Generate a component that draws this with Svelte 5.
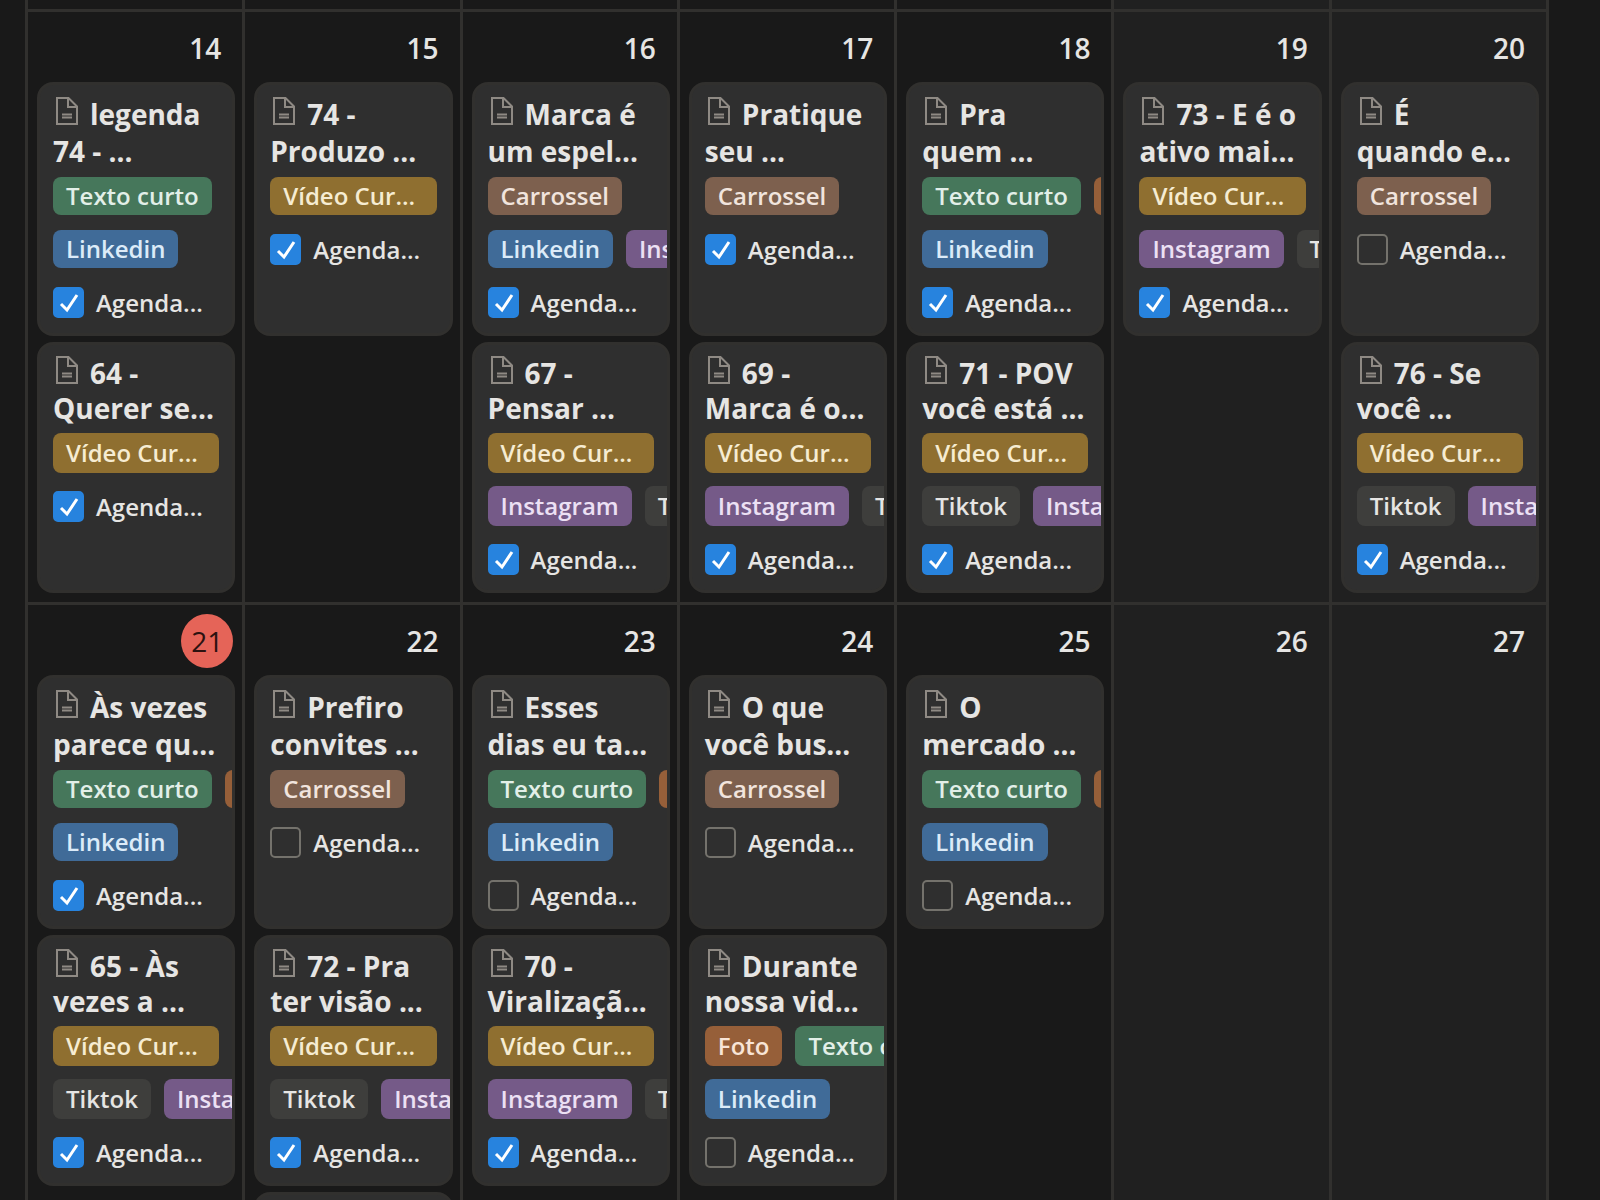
<script lang="ts">
  type Tag = 'texto' | 'video' | 'carrossel' | 'foto' | 'linkedin' | 'instagram' | 'tiktok';
  type Post = { title: string[]; formats: Tag[]; networks?: Tag[]; scheduled: boolean };
  type Day = { date: number; weekend?: boolean; today?: boolean; posts: Post[]; more?: boolean };

  const labels: Record<Tag, string> = {
    texto: 'Texto curto',
    video: 'Vídeo Cur...',
    carrossel: 'Carrossel',
    foto: 'Foto',
    linkedin: 'Linkedin',
    instagram: 'Instagram',
    tiktok: 'Tiktok'
  };

  const weeks: Day[][] = [
    [
      { date: 14, posts: [
        { title: ['legenda', '74 - ...'], formats: ['texto'], networks: ['linkedin'], scheduled: true },
        { title: ['64 -', 'Querer se...'], formats: ['video'], scheduled: true }
      ] },
      { date: 15, posts: [
        { title: ['74 -', 'Produzo ...'], formats: ['video'], scheduled: true }
      ] },
      { date: 16, posts: [
        { title: ['Marca é', 'um espel...'], formats: ['carrossel'], networks: ['linkedin', 'instagram'], scheduled: true },
        { title: ['67 -', 'Pensar ...'], formats: ['video'], networks: ['instagram', 'tiktok'], scheduled: true }
      ] },
      { date: 17, posts: [
        { title: ['Pratique', 'seu ...'], formats: ['carrossel'], scheduled: true },
        { title: ['69 -', 'Marca é o...'], formats: ['video'], networks: ['instagram', 'tiktok'], scheduled: true }
      ] },
      { date: 18, posts: [
        { title: ['Pra', 'quem ...'], formats: ['texto', 'foto'], networks: ['linkedin'], scheduled: true },
        { title: ['71 - POV', 'você está ...'], formats: ['video'], networks: ['tiktok', 'instagram'], scheduled: true }
      ] },
      { date: 19, weekend: true, posts: [
        { title: ['73 - E é o', 'ativo mai...'], formats: ['video'], networks: ['instagram', 'tiktok'], scheduled: true }
      ] },
      { date: 20, weekend: true, posts: [
        { title: ['É', 'quando e...'], formats: ['carrossel'], scheduled: false },
        { title: ['76 - Se', 'você ...'], formats: ['video'], networks: ['tiktok', 'instagram'], scheduled: true }
      ] }
    ],
    [
      { date: 21, today: true, posts: [
        { title: ['Às vezes', 'parece qu...'], formats: ['texto', 'foto'], networks: ['linkedin'], scheduled: true },
        { title: ['65 - Às', 'vezes a ...'], formats: ['video'], networks: ['tiktok', 'instagram'], scheduled: true }
      ] },
      { date: 22, more: true, posts: [
        { title: ['Prefiro', 'convites ...'], formats: ['carrossel'], scheduled: false },
        { title: ['72 - Pra', 'ter visão ...'], formats: ['video'], networks: ['tiktok', 'instagram'], scheduled: true }
      ] },
      { date: 23, posts: [
        { title: ['Esses', 'dias eu ta...'], formats: ['texto', 'foto'], networks: ['linkedin'], scheduled: false },
        { title: ['70 -', 'Viralizaçã...'], formats: ['video'], networks: ['instagram', 'tiktok'], scheduled: true }
      ] },
      { date: 24, posts: [
        { title: ['O que', 'você bus...'], formats: ['carrossel'], scheduled: false },
        { title: ['Durante', 'nossa vid...'], formats: ['foto', 'texto'], networks: ['linkedin'], scheduled: false }
      ] },
      { date: 25, posts: [
        { title: ['O', 'mercado ...'], formats: ['texto', 'foto'], networks: ['linkedin'], scheduled: false }
      ] },
      { date: 26, weekend: true, posts: [] },
      { date: 27, weekend: true, posts: [] }
    ]
  ];
</script>

{#snippet tagRow(tags: Tag[])}
  <div class="tags">
    {#each tags as tag}
      <span class="tag {tag}">{labels[tag]}</span>
    {/each}
  </div>
{/snippet}

<main class="calendar">
  <!-- tail of the previous week -->
  <div class="week previous">
    {#each weeks[0] as day}
      <div class="day" class:weekend={day.weekend}></div>
    {/each}
  </div>

  {#each weeks as week}
    <div class="week">
      {#each week as day}
        <section class="day" class:weekend={day.weekend}>
          <header>
            <span class="date" class:today={day.today}>{day.date}</span>
          </header>
          <div class="posts">
            {#each day.posts as post}
              <article class="card">
                <h2>
                  <span class="line">
                    <svg class="page-icon" viewBox="0 0 24 28" aria-hidden="true">
                      <path d="M2 1h11.5L22 9.500v17.500H2z" />
                      <path d="M13 1.500v8.500h8.500" />
                      <path d="M7 17.500h10M7 20.500h10" />
                    </svg>{post.title[0]}
                  </span>
                  <span class="line">{post.title[1]}</span>
                </h2>
                {@render tagRow(post.formats)}
                {#if post.networks}
                  {@render tagRow(post.networks)}
                {/if}
                <label class="check">
                  <span class="box">
                    <input type="checkbox" bind:checked={post.scheduled} />
                    <svg viewBox="0 0 31 31" aria-hidden="true">
                      <path d="M8 17l6 6L24 8" />
                    </svg>
                  </span>
                  Agenda...
                </label>
              </article>
            {/each}
            {#if day.more}
              <article class="card"></article>
            {/if}
          </div>
        </section>
      {/each}
    </div>
  {/each}
</main>

<style>
  :global(body) {
    margin: 0;
    background: #191919;
    overflow: hidden;
  }

  .calendar {
    height: 100vh;
    overflow: hidden;
    box-sizing: border-box;
    padding: 0 51px 0 25px;
    font-family: "Open Sans", "Noto Sans", sans-serif;
    color: #e6e5e3;
  }

  .week {
    display: grid;
    grid-template-columns: repeat(7, minmax(0, 1fr));
    border-top: 3px solid #31302e;
    border-right: 3px solid #31302e;
  }

  .week.previous {
    height: 9px;
    border-top: 0;
  }

  .day {
    border-left: 3px solid #31302e;
    padding: 0 7px 9px 9px;
  }

  .previous .day { padding-bottom: 0; }

  .weekend { background: #202020; }

  header {
    display: flex;
    justify-content: flex-end;
    padding: 9px 2px 7px 0;
  }

  .date {
    box-sizing: border-box;
    width: 52px;
    height: 54px;
    padding-right: 4px;
    border-radius: 50%;
    font-size: 28px;
    font-weight: 600;
    line-height: 54px;
    text-align: center;
  }

  .today {
    padding-right: 0;
    background: #e56458;
    color: #2c1210;
    font-weight: 400;
  }

  .posts {
    display: flex;
    flex-direction: column;
    gap: 6px;
  }

  .card {
    --title-line: 37px;
    --tag-height: 38px;
    --row-gap: 15px;
    box-sizing: border-box;
    min-height: 254px;
    padding: 11px 13px 8px;
    border: 3px solid #31302e;
    border-radius: 16px;
    background: #2f2f2f;
    overflow: hidden;
  }

  .card + .card {
    --title-line: 35px;
    --tag-height: 40px;
    --row-gap: 13px;
    min-height: 251px;
  }

  h2 {
    margin: 0 0 7px;
    font-size: 28px;
    font-weight: 700;
    line-height: var(--title-line);
  }

  .line {
    display: block;
    height: var(--title-line);
    white-space: nowrap;
  }

  .page-icon {
    width: 24px;
    height: 28px;
    margin: 0 11px 0 2px;
    fill: none;
    stroke: #8f8a84;
    stroke-width: 2;
  }

  .tags {
    display: flex;
    gap: 13px;
    margin-bottom: var(--row-gap);
  }

  .tag {
    flex: none;
    box-sizing: border-box;
    height: var(--tag-height);
    padding: 0 13px;
    border-radius: 8px;
    font-size: 24px;
    font-weight: 600;
    line-height: var(--tag-height);
    white-space: nowrap;
  }

  .texto { background: #46775b; color: #e2efe8; }
  .video { background: #8f6f30; color: #f6ecd2; width: 100%; }
  .carrossel { background: #7d604e; color: #f1e4dd; }
  .foto { background: #965f39; color: #f8e4d6; }
  .linkedin { background: #406b98; color: #dcebf8; }
  .instagram { background: #755a88; color: #ece0f4; }
  .tiktok { background: #3e3e3c; color: #e6e5e3; }

  .check {
    display: flex;
    align-items: center;
    gap: 12px;
    height: var(--tag-height);
    font-size: 24px;
    font-weight: 600;
    white-space: nowrap;
  }

  .box {
    display: grid;
    width: 31px;
    height: 31px;
  }

  .box input,
  .box svg {
    grid-area: 1 / 1;
    width: 31px;
    height: 31px;
  }

  .box input {
    appearance: none;
    box-sizing: border-box;
    margin: 0;
    border: 2px solid #74726c;
    border-radius: 5px;
  }

  .box input:checked {
    border-color: #2783de;
    background: #2783de;
  }

  .box svg {
    fill: none;
    stroke: #fff;
    stroke-width: 3;
    visibility: hidden;
    pointer-events: none;
  }

  .box input:checked + svg { visibility: visible; }
</style>
